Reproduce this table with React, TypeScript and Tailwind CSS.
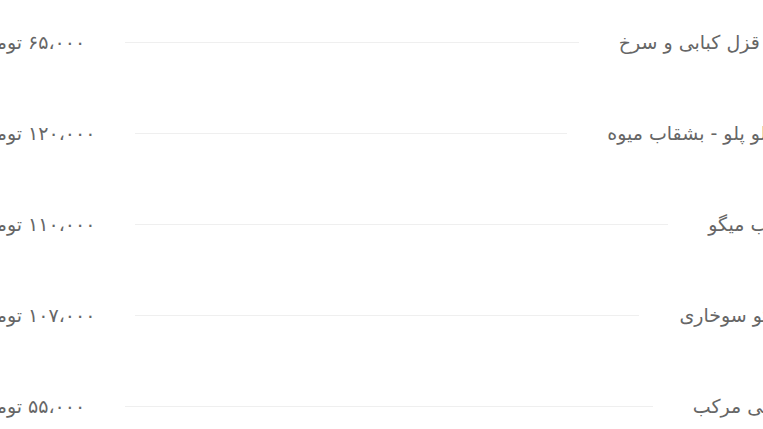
const items = [
  { name: "آب قزل کبابی و سرخ", price: "۶۵،۰۰۰" },
  { name: "آلبالو پلو - بشقاب میوه", price: "۱۲۰،۰۰۰" },
  { name: "کباب میگو", price: "۱۱۰،۰۰۰" },
  { name: "میگو سوخاری", price: "۱۰۷،۰۰۰" },
  { name: "ماهی مرکب", price: "۵۵،۰۰۰" },
];

export default function App() {
  return (
    <div className="h-[429px] w-full overflow-hidden bg-white font-['DejaVu_Sans',sans-serif] text-[19px] text-[#666]">
      <div dir="rtl" className="-ml-[23px] -mr-[26px] -mt-[3px]">
        {items.map((item) => (
          <div key={item.name} className="flex h-[91px] items-center">
            <span className="whitespace-nowrap">{item.name}</span>
            <div className="mx-10 h-px flex-1 bg-[#efefef]" />
            <span className="whitespace-nowrap">{item.price} تومان</span>
          </div>
        ))}
      </div>
    </div>
  );
}
